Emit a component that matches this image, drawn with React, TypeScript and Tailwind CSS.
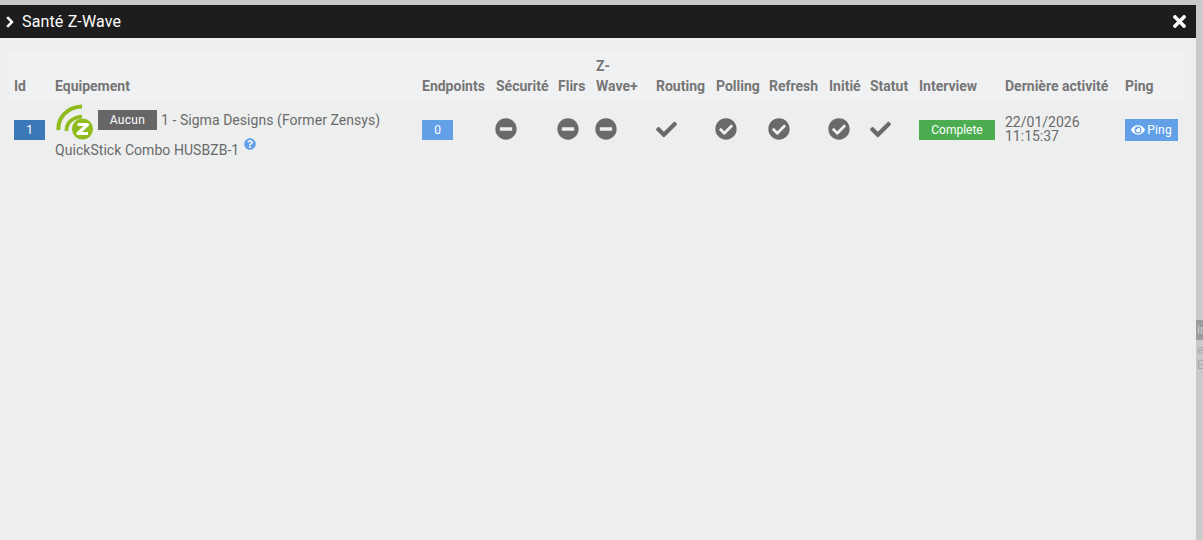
import React from "react";
import { FaCheck, FaCheckCircle, FaChevronRight, FaEye, FaMinusCircle, FaQuestionCircle, FaTimes } from "react-icons/fa";

function ZWaveLogo() {
  return (
    <svg width="38" height="37" viewBox="0 0 38 37" fill="none" className="block">
      <path d="M2.5 26 C1.5 13 12 3 26 2.5" stroke="#8fbb1d" strokeWidth="4" strokeLinecap="butt" />
      <path d="M10.5 27 C10 19 16 13.5 26 12.5" stroke="#8fbb1d" strokeWidth="3.6" strokeLinecap="butt" />
      <circle cx="26.5" cy="25" r="10.5" fill="#8fbb1d" />
      <path d="M21.5 20.5 H31.5 L22 29.5 H32" stroke="#ffffff" strokeWidth="3.2" strokeLinejoin="round" />
    </svg>
  );
}

const headers: [string, number][] = [
  ["Id", 41], ["Equipement", 367], ["Endpoints", 74], ["Sécurité", 62], ["Flirs", 38], ["Z-Wave+", 60], ["Routing", 60],
  ["Polling", 53], ["Refresh", 60], ["Initié", 41], ["Statut", 49], ["Interview", 86], ["Dernière activité", 120], ["Ping", 63],
];

const Minus = () => <FaMinusCircle size={22} className="block -ml-px" />;
const Check = () => <FaCheck size={21} className="block" />;
const CheckC = () => <FaCheckCircle size={22} className="block -ml-px" />;

export default function App() {
  return (
    <div className="h-[540px] w-[1203px] overflow-hidden flex flex-col bg-[#c9c9c9] text-[14px] leading-[20px] text-[#666666] [font-family:Roboto,'Liberation_Sans',sans-serif]">
      <div className="h-[5px] shrink-0" />
      <div className="flex flex-1 min-h-0">
        <div className="w-[1196px] shrink-0 flex flex-col bg-[#edefef]">
          <div className="h-[33px] shrink-0 bg-[#1d1d1d] flex items-center justify-between pl-[4px] pr-[7px] text-white">
            <div className="flex items-center gap-[6px]">
              <FaChevronRight size={12} stroke="currentColor" strokeWidth={40} />
              <span className="text-[16px] tracking-[0.15px]">Santé Z-Wave</span>
            </div>
            <FaTimes size={19} />
          </div>
          <div className="pt-[13px] pl-[9px]">
            <table className="table-fixed w-[1174px] border-collapse">
              <colgroup>
                {headers.map(([h, w]) => <col key={h} style={{ width: w }} />)}
              </colgroup>
              <thead>
                <tr className="h-[50px] bg-[#f0f1f3] text-[#767676]">
                  {headers.map(([h]) => (
                    <th key={h} className="px-[5px] pb-[5px] align-bottom text-left font-bold leading-[20px]">
                      {h === "Z-Wave+" ? <>Z-<br />Wave+</> : h}
                    </th>
                  ))}
                </tr>
              </thead>
              <tbody className="text-[#6a6a6a]">
                <tr className="h-[56px]">
                  <td className="px-[5px] pb-[2px] align-middle">
                    <span className="flex h-[20px] w-[31px] items-center justify-center bg-[#3a78b8] text-[12px] text-white">1</span>
                  </td>
                  <td className="px-[5px] align-top">
                    <div className="flex h-[38px] items-start pt-[3px]">
                      <div className="ml-px"><ZWaveLogo /></div>
                      <span className="ml-[4px] mt-[6px] flex h-[20px] w-[59px] items-center justify-center bg-[#666666] text-[12px] tracking-[0.3px] text-white">Aucun</span>
                      <span className="ml-1 mt-[6px] leading-[20px] tracking-[0.05px]">1 - Sigma Designs (Former Zensys)</span>
                    </div>
                    <div className="flex items-start leading-[20px] tracking-[0.05px]">
                      <span className="mt-px">QuickStick Combo HUSBZB-1</span>
                      <FaQuestionCircle size={12} className="ml-[5px] -mt-px text-[#62a1e8]" />
                    </div>
                  </td>
                  <td className="px-[5px] pb-[2px] align-middle">
                    <span className="flex h-[20px] w-[31px] items-center justify-center bg-[#62a1e8] text-[12px] text-white">0</span>
                  </td>
                  <td className="px-[5px] pb-[3px] align-middle"><Minus /></td>
                  <td className="px-[5px] pb-[3px] align-middle"><Minus /></td>
                  <td className="px-[5px] pb-[3px] align-middle"><Minus /></td>
                  <td className="px-[5px] pb-[3px] align-middle"><Check /></td>
                  <td className="px-[5px] pb-[3px] align-middle"><CheckC /></td>
                  <td className="px-[5px] pb-[3px] align-middle"><CheckC /></td>
                  <td className="px-[5px] pb-[3px] align-middle"><CheckC /></td>
                  <td className="px-[5px] pb-[3px] align-middle"><Check /></td>
                  <td className="px-[5px] pb-[2px] align-middle">
                    <span className="flex h-[20px] w-[76px] items-center justify-center bg-[#4cad50] text-[12px] text-white">Complete</span>
                  </td>
                  <td className="px-[5px] pb-[3px] align-middle leading-[14px]">22/01/2026<br />11:15:37</td>
                  <td className="px-[5px] pb-[2px] align-middle">
                    <span className="flex h-[22px] w-[53px] items-center justify-center gap-[2px] bg-[#62a1e8] text-[12px] tracking-[0.2px] text-white">
                      <FaEye size={14} />Ping
                    </span>
                  </td>
                </tr>
              </tbody>
            </table>
          </div>
        </div>
        <div className="flex-1 overflow-hidden pt-[315px] text-[12px] leading-[15px] text-[#a8a8a8]">
          <div className="h-[20px] bg-[#9c9c9c] pl-px leading-[20px] text-[#d0d0d0]">in</div>
          <div className="pl-px pt-[3px]">e</div>
          <div className="pl-px">E</div>
        </div>
      </div>
    </div>
  );
}
